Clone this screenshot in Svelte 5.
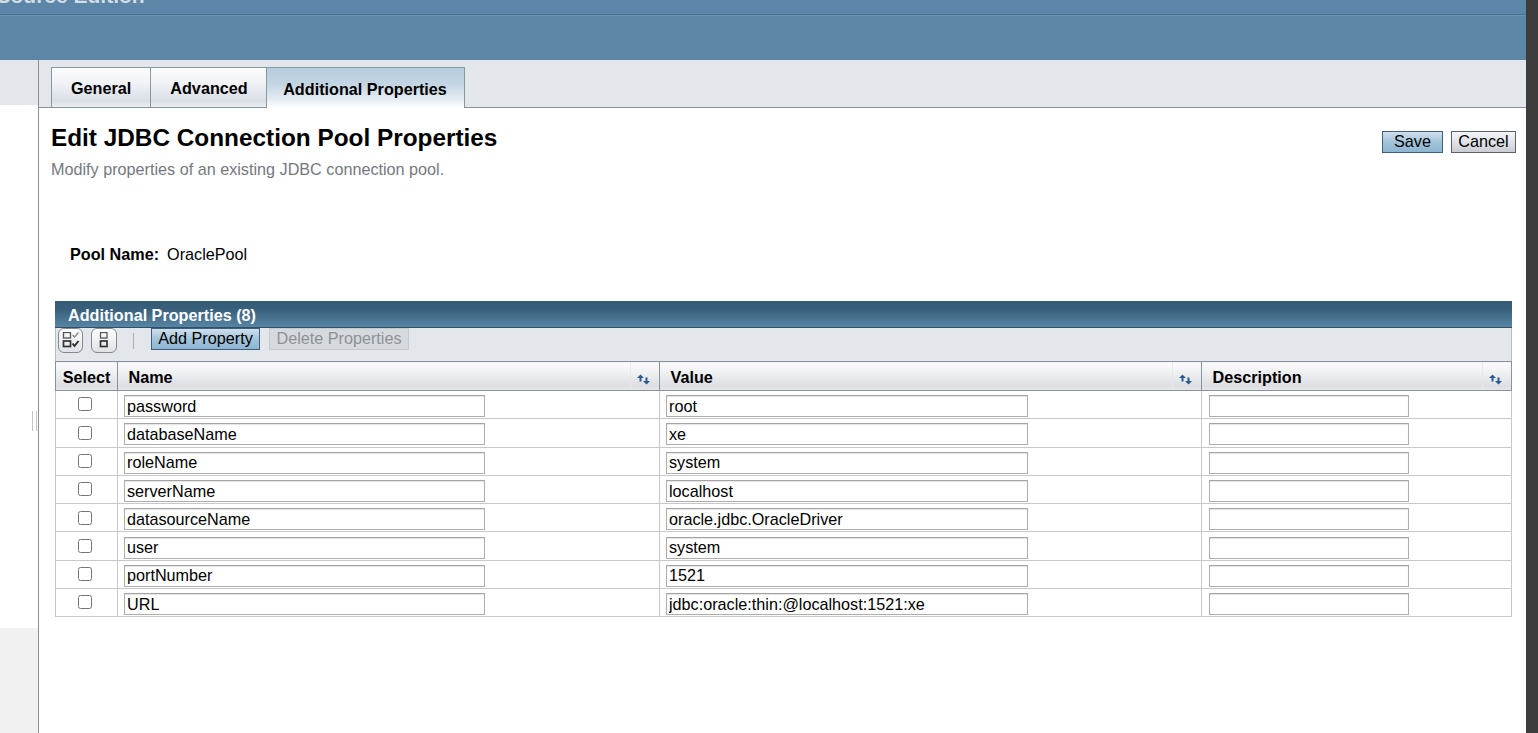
<script>
  const tabs = ["General", "Advanced", "Additional Properties"];
  const active = "Additional Properties";

  const rows = [
    { name: "password", value: "root" },
    { name: "databaseName", value: "xe" },
    { name: "roleName", value: "system" },
    { name: "serverName", value: "localhost" },
    { name: "datasourceName", value: "oracle.jdbc.OracleDriver" },
    { name: "user", value: "system" },
    { name: "portNumber", value: "1521" },
    { name: "URL", value: "jdbc:oracle:thin:@localhost:1521:xe" },
  ];
</script>

{#snippet sortIcon()}
  <span class="sort">
    <svg width="13" height="11" viewBox="0 0 13 11">
      <path d="M3.5 0.5 L7 4 H4.5 V7.5 H2.5 V4 H0 Z" fill="#2a5a94" />
      <path d="M9.5 10.5 L13 7 H10.5 V3.5 H8.5 V7 H6 Z" fill="#2a5a94" />
    </svg>
  </span>
{/snippet}

<div class="page">
  <div class="main">
    <header class="masthead">
      <div class="brand"><span>Open Source Edition</span></div>
      <div class="mast-fill"></div>
    </header>

    <div class="body">
      <aside class="side">
        <div class="side-top"></div>
        <div class="side-mid">
          <span class="grip"></span>
        </div>
        <div class="side-foot"></div>
      </aside>

      <main class="content">
        <nav class="tabs">
          {#each tabs as tab}
            <div class="tab" class:active={tab === active}>{tab}</div>
          {/each}
        </nav>

        <div class="title-row">
          <div>
            <h1>Edit JDBC Connection Pool Properties</h1>
            <p class="help">Modify properties of an existing JDBC connection pool.</p>
          </div>
          <div class="actions">
            <button class="btn primary">Save</button>
            <button class="btn secondary">Cancel</button>
          </div>
        </div>

        <div class="pool">
          <span class="pool-label">Pool Name:</span>
          <span class="pool-value">OraclePool</span>
        </div>

        <section class="panel">
          <div class="panel-title">Additional Properties (8)</div>
          <div class="toolbar">
            <button class="icon-btn" aria-label="Select all">
              <svg width="18" height="18" viewBox="0 0 18 18" fill="none" stroke="#333" stroke-width="1.3">
                <rect x="1.5" y="0.5" width="7" height="5.5" stroke="#555" />
                <rect x="1.5" y="9" width="7" height="5.5" stroke-width="1.7" />
                <path d="M10.5 3 L12.5 5 L16.5 0.5" stroke="#888" />
                <path d="M10.5 11.5 L12.5 14 L16.5 9" stroke-width="2" />
              </svg>
            </button>
            <button class="icon-btn second" aria-label="Deselect all">
              <svg width="18" height="18" viewBox="0 0 18 18" fill="none" stroke="#333" stroke-width="1.3">
                <rect x="5.5" y="0.5" width="6.5" height="5.5" stroke="#555" />
                <rect x="5.5" y="9" width="6.5" height="5.5" stroke-width="1.7" />
              </svg>
            </button>
            <span class="sep"></span>
            <button class="btn primary add">Add Property</button>
            <button class="btn disabled">Delete Properties</button>
          </div>

          <table>
            <colgroup>
              <col class="c-select" />
              <col class="c-text" />
              <col class="c-text" />
              <col />
            </colgroup>
            <thead>
              <tr>
                <th class="center">Select</th>
                <th><div class="th-in"><span>Name</span>{@render sortIcon()}</div></th>
                <th><div class="th-in"><span>Value</span>{@render sortIcon()}</div></th>
                <th><div class="th-in"><span>Description</span>{@render sortIcon()}</div></th>
              </tr>
            </thead>
            <tbody>
              {#each rows as row}
                <tr>
                  <td class="center"><input type="checkbox" /></td>
                  <td><input class="field" type="text" value={row.name} /></td>
                  <td><input class="field" type="text" value={row.value} /></td>
                  <td><input class="field desc" type="text" value="" /></td>
                </tr>
              {/each}
            </tbody>
          </table>
        </section>
      </main>
    </div>
  </div>
  <div class="scrollbar"></div>
</div>

<style>
  :global(body) {
    margin: 0;
    background: #fff;
    font-family: "Liberation Sans", Arial, sans-serif;
    font-size: 16.2px;
    color: #000;
  }

  .page {
    display: flex;
    width: 1538px;
    height: 733px;
    overflow: hidden;
  }

  .main {
    display: flex;
    flex-direction: column;
    width: 1526px;
  }

  .scrollbar {
    width: 12px;
    background: #3c3c3c;
  }

  /* Masthead */
  .masthead {
    height: 60px;
    background: #5b86a8;
    flex: none;
  }

  .brand {
    height: 14px;
    border-bottom: 1px solid #47708f;
    overflow: hidden;
  }

  .brand span {
    display: block;
    margin: -18px 0 0 -63px;
    font-size: 21px;
    line-height: 28px;
    font-weight: bold;
    white-space: nowrap;
    color: #d3dde5;
  }

  .mast-fill {
    height: 45px;
    border-top: 1px solid #6d94b2;
    box-sizing: border-box;
  }

  /* Layout */
  .body {
    flex: 1;
    display: flex;
    min-height: 0;
  }

  .side {
    width: 38px;
    flex: none;
    display: flex;
    flex-direction: column;
  }

  .side-top {
    height: 45px;
    background: #e3e6eb;
  }

  .side-mid {
    height: 523px;
    padding-top: 306px;
    box-sizing: border-box;
    display: flex;
    justify-content: flex-end;
    align-items: flex-start;
    padding-right: 1px;
  }

  .grip {
    width: 3px;
    height: 20px;
    border-left: 1px solid #c4c4c4;
    border-right: 1px solid #c4c4c4;
  }

  .side-foot {
    flex: 1;
    background: #f1f1f1;
  }

  .content {
    flex: 1;
    min-width: 0;
    border-left: 1px solid #8b8f92;
  }

  /* Tabs */
  .tabs {
    display: flex;
    height: 48px;
    box-sizing: border-box;
    padding: 7px 0 0 12px;
    background: #e3e6eb;
    border-bottom: 1px solid #87949e;
  }

  .tab {
    height: 40px;
    box-sizing: border-box;
    padding: 11px 19px 0;
    margin-right: -1px;
    border: 1px solid #87989f;
    border-bottom: 0;
    background: linear-gradient(#fbfcfd, #f2f4f7 35%, #d9dee6 85%, #eceff3);
    font-weight: bold;
    line-height: 18px;
  }

  .tab:nth-child(2) {
    padding: 11px 18px 0 19px;
  }

  .tab.active {
    height: 41px;
    padding: 12px 17px 0 16.5px;
    margin-bottom: -1px;
    background: linear-gradient(#b7ccdd, #c3d5e3 40%, #e6eef3 80%, #fff);
  }

  /* Title */
  .title-row {
    display: flex;
    justify-content: space-between;
    padding: 15px 10px 0 12px;
    box-sizing: border-box;
    height: 92px;
  }

  h1 {
    margin: 0;
    font-size: 24.35px;
    line-height: 29px;
    font-weight: bold;
  }

  .help {
    margin: 8px 0 0;
    line-height: 18px;
    color: #74797f;
  }

  .actions {
    display: flex;
    gap: 8px;
    padding-top: 8px;
  }

  .btn {
    height: 22px;
    padding: 0 0 2px;
    font: 16.2px/18px "Liberation Sans", Arial, sans-serif;
    color: #000;
    box-sizing: border-box;
  }

  .actions .primary {
    width: 61px;
  }

  .actions .secondary {
    width: 65px;
  }

  .primary {
    border: 1px solid #3f5f7c;
    background: linear-gradient(#cfe0ec, #a3c4da 50%, #8db6d2);
  }

  .secondary {
    border: 1px solid #5c6168;
    background: linear-gradient(#f4f5f7, #dcdfe4 60%, #c9ccd3);
  }

  /* Pool name */
  .pool {
    display: flex;
    gap: 8px;
    align-items: baseline;
    padding: 45px 0 0 31px;
    height: 101px;
    box-sizing: border-box;
    line-height: 18px;
  }

  .pool-label {
    font-weight: bold;
  }

  /* Table panel */
  .panel {
    margin-left: 16px;
    width: 1457px;
  }

  .panel-title {
    height: 27px;
    box-sizing: border-box;
    padding: 5px 0 0 13px;
    border-bottom: 1px solid #2e5068;
    background: linear-gradient(#345a74, #3a617c 35%, #5885a5);
    color: #fff;
    font-weight: bold;
    line-height: 18px;
  }

  .toolbar {
    height: 33px;
    box-sizing: border-box;
    display: flex;
    align-items: flex-start;
    background: #e3e6eb;
    border-left: 1px solid #b5bcc2;
    border-right: 1px solid #b5bcc2;
    padding: 0 0 0 2px;
  }

  .icon-btn {
    width: 25px;
    height: 25px;
    margin-right: 8px;
    padding: 0;
    display: flex;
    align-items: center;
    justify-content: center;
    border: 1px solid #85888c;
    border-radius: 6px;
    background: linear-gradient(#fff, #dfe2e6);
    box-sizing: border-box;
  }

  .icon-btn.second {
    width: 26px;
  }

  .sep {
    width: 1px;
    height: 16px;
    margin: 5px 17px 0 8px;
    background: #a9adb2;
  }

  .add {
    width: 109px;
    margin-right: 9px;
  }

  .disabled {
    width: 140px;
    border: 1px solid #c6c9cd;
    background: #d6d9dd;
    color: #8e9297;
  }

  table {
    width: 100%;
    table-layout: fixed;
    border-collapse: collapse;
  }

  .c-select {
    width: 62px;
  }

  .c-text {
    width: 542px;
  }

  th {
    height: 28px;
    padding: 0;
    text-align: left;
    font-weight: bold;
    border: 1px solid #87949e;
    background: linear-gradient(#fbfbfc, #eeeff1 40%, #dcdee2 85%, #e6e7ea);
    line-height: 18px;
  }

  th.center {
    height: 26px;
    text-align: center;
    padding-top: 2px;
  }

  .th-in {
    display: flex;
    justify-content: space-between;
    align-items: stretch;
    height: 28px;
  }

  .th-in > span:first-child {
    padding: 6px 0 0 10.5px;
  }

  .sort {
    width: 29px;
    display: flex;
    align-items: center;
    justify-content: center;
    padding: 6px 4px 0 0;
    box-sizing: border-box;
    border-left: 1px solid #e7e8ea;
  }

  td {
    height: 24.3px;
    padding: 3px 0 0 6px;
    border: 1px solid #c6c9cc;
  }

  td.center {
    padding: 0 3px 3px 0;
    text-align: center;
  }

  td input[type="checkbox"] {
    width: 14px;
    height: 14px;
    margin: 0;
    vertical-align: middle;
  }

  .field {
    display: block;
    width: 361px;
    height: 22px;
    box-sizing: border-box;
    padding: 0 2px;
    border: 1px solid #aeaeae;
    border-top-color: #a4a4a4;
    box-shadow: inset 0 1px 1px #e4e4e4;
    font: 16.2px "Liberation Sans", Arial, sans-serif;
    color: #000;
    background: #fff;
    outline: none;
  }

  td:nth-child(3) .field {
    width: 362px;
  }

  .field.desc {
    width: 200px;
    margin-left: 1px;
  }
</style>
